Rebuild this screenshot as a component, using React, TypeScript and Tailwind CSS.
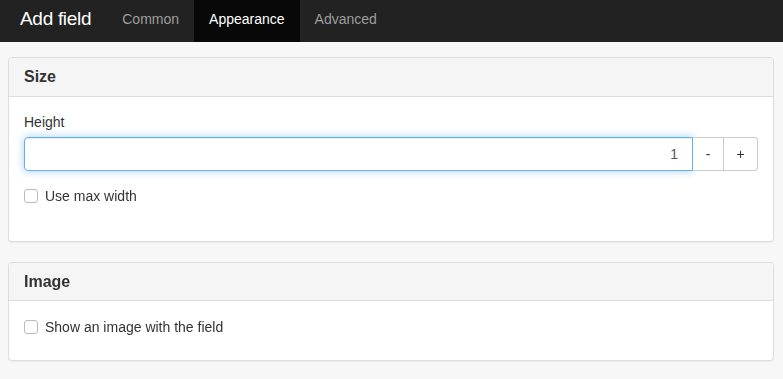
import { useState } from 'react';

export default function App() {
  const [height, setHeight] = useState(1);
  const tabs = ['Common', 'Appearance', 'Advanced'];
  const active = 'Appearance';

  return (
    <div className="min-h-[379px] bg-[#f7f7f7] text-[#333] text-[14px] font-['Liberation_Sans',Arial,sans-serif]">
      <div className="h-[42px] bg-[#222] flex items-stretch">
        <div className="pl-[20px] pr-[16px] pb-[4px] flex items-center text-white text-[19px] tracking-[-0.3px]">Add field</div>
        {tabs.map((t) => (
          <div
            key={t}
            className={
              t === active
                ? 'px-[15px] pb-[3px] flex items-center bg-[#080808] text-white'
                : 'px-[15px] pb-[3px] flex items-center text-[#9d9d9d]'
            }
          >
            {t}
          </div>
        ))}
      </div>

      <div className="pt-[15px] pl-[8px] pr-[9px]">
        <div className="bg-white border border-[#ddd] rounded-[4px] shadow-[0_1px_1px_rgba(0,0,0,0.05)]">
          <div className="h-[39px] bg-[#f5f5f5] border-b border-[#ddd] rounded-t-[4px] px-[15px] flex items-center font-bold text-[16px]">
            Size
          </div>
          <div className="px-[15px] pt-[15px] pb-[35px]">
            <div className="mb-[5px] leading-[20px]">Height</div>
            <div className="flex h-[34px]">
              <input
                autoFocus
                value={height}
                onChange={(e) => setHeight(Number(e.target.value) || 0)}
                className="flex-1 min-w-0 h-[34px] border border-[#66afe9] rounded-l-[4px] pl-[12px] pr-[14px] text-right outline-none shadow-[inset_0_1px_1px_rgba(0,0,0,0.075),0_0_8px_rgba(102,175,233,0.6)] text-[#555]"
              />
              <button
                onClick={() => setHeight(height - 1)}
                className="w-[31px] h-[34px] border border-l-0 border-[#ccc] bg-white text-[#333]"
              >
                -
              </button>
              <button
                onClick={() => setHeight(height + 1)}
                className="w-[34px] h-[34px] border border-l-0 border-[#ccc] rounded-r-[4px] bg-white text-[#333]"
              >
                +
              </button>
            </div>
            <label className="mt-[15px] flex items-center gap-[7px] leading-[20px]">
              <span className="w-[14px] h-[14px] border border-[#bbb] rounded-[3px] bg-white" />
              Use max width
            </label>
          </div>
        </div>

        <div className="mt-[20px] bg-white border border-[#ddd] rounded-[4px] shadow-[0_1px_1px_rgba(0,0,0,0.05)]">
          <div className="h-[38px] bg-[#f5f5f5] border-b border-[#ddd] rounded-t-[4px] px-[15px] flex items-center font-bold text-[16px]">
            Image
          </div>
          <div className="px-[15px] pt-[16px] pb-[23px]">
            <label className="flex items-center gap-[7px] leading-[20px]">
              <span className="w-[14px] h-[14px] border border-[#bbb] rounded-[3px] bg-white" />
              Show an image with the field
            </label>
          </div>
        </div>
      </div>
    </div>
  );
}
